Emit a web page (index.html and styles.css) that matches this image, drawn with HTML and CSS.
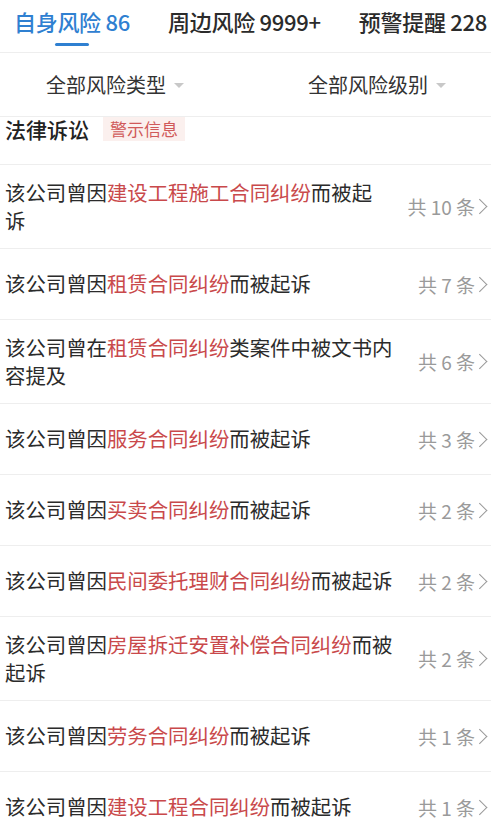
FILE: index.html
```html
<!DOCTYPE html>
<html lang="zh-CN">
<head>
    <meta charset="UTF-8">
    <meta name="viewport" content="width=device-width, initial-scale=1.0">
    <title>风险信息</title>
    <link rel="stylesheet" href="styles.css">
</head>
<body>
    <div class="tabs">
        <div class="tab active">自身风险 86</div>
        <div class="tab">周边风险 9999+</div>
        <div class="tab">预警提醒 228</div>
    </div>

    <div class="filters">
        <div class="filter">全部风险类型<span class="caret"></span></div>
        <div class="filter">全部风险级别<span class="caret"></span></div>
    </div>

    <div class="section-head">
        <span class="section-title">法律诉讼</span>
        <span class="tag">警示信息</span>
    </div>

    <ul class="list">
        <li class="row">
            <p class="desc">该公司曾因<em>建设工程施工合同纠纷</em>而被起诉</p>
            <span class="count">共 10 条</span>
        </li>
        <li class="row">
            <p class="desc">该公司曾因<em>租赁合同纠纷</em>而被起诉</p>
            <span class="count">共 7 条</span>
        </li>
        <li class="row">
            <p class="desc">该公司曾在<em>租赁合同纠纷</em>类案件中被文书内容提及</p>
            <span class="count">共 6 条</span>
        </li>
        <li class="row">
            <p class="desc">该公司曾因<em>服务合同纠纷</em>而被起诉</p>
            <span class="count">共 3 条</span>
        </li>
        <li class="row">
            <p class="desc">该公司曾因<em>买卖合同纠纷</em>而被起诉</p>
            <span class="count">共 2 条</span>
        </li>
        <li class="row">
            <p class="desc">该公司曾因<em>民间委托理财合同纠纷</em>而被起诉</p>
            <span class="count">共 2 条</span>
        </li>
        <li class="row">
            <p class="desc">该公司曾因<em>房屋拆迁安置补偿合同纠纷</em>而被起诉</p>
            <span class="count">共 2 条</span>
        </li>
        <li class="row">
            <p class="desc">该公司曾因<em>劳务合同纠纷</em>而被起诉</p>
            <span class="count">共 1 条</span>
        </li>
        <li class="row">
            <p class="desc">该公司曾因<em>建设工程合同纠纷</em>而被起诉</p>
            <span class="count">共 1 条</span>
        </li>
    </ul>
</body>
</html>
```

FILE: styles.css
```css
body {
    margin: 0;
    background: #fff;
    color: #2b2b2b;
    font-family: "Noto Sans CJK SC", "Noto Sans", sans-serif;
    overflow: hidden;
}
.tabs {
    display: flex;
    justify-content: space-between;
    align-items: flex-start;
    height: 52px;
    padding: 0 4px 0 14px;
    border-bottom: 1px solid #eeeeee;
}
.tab {
    position: relative;
    height: 52px;
    font-size: 22px;
    font-weight: 500;
    line-height: 42px;
    letter-spacing: -0.3px;
    color: #2b2b2b;
}
.tab.active {
    color: #2f80d1;
}
.tab.active::after {
    content: "";
    position: absolute;
    left: 50%;
    top: 43px;
    width: 34px;
    height: 3px;
    margin-left: -17px;
    border-radius: 2px;
    background: #2f80d1;
}
.filters {
    display: flex;
    justify-content: space-between;
    align-items: center;
    height: 63px;
    padding: 0 45px 0 46px;
    border-bottom: 1px solid #eeeeee;
    font-size: 20px;
    color: #333;
}
.filter {
    display: flex;
    align-items: center;
}
.caret {
    width: 0;
    height: 0;
    margin-left: 8px;
    margin-top: 2px;
    border-left: 5px solid transparent;
    border-right: 5px solid transparent;
    border-top: 5px solid #c8c8c8;
}
.section-head {
    display: flex;
    align-items: flex-start;
    height: 47px;
    padding: 0 0 0 5px;
    border-bottom: 1px solid #eeeeee;
}
.section-title {
    font-size: 21px;
    font-weight: 500;
    line-height: 24px;
    color: #222;
}
.tag {
    margin-left: 14px;
    padding: 0 7px;
    font-size: 17px;
    line-height: 24px;
    color: #d05a5a;
    background: #fbf0ee;
}
.list {
    list-style: none;
    margin: 0;
    padding: 0;
}
.row {
    display: flex;
    align-items: center;
    gap: 18px;
    box-sizing: border-box;
    min-height: 71px;
    padding: 14px 3px 14px 5px;
    border-bottom: 1px solid #eeeeee;
}
.desc {
    flex: 1;
    margin: 0;
    font-size: 20.4px;
    line-height: 27.5px;
    color: #2b2b2b;
}
.desc em {
    font-style: normal;
    color: #c9494b;
}
.count {
    display: flex;
    align-items: center;
    white-space: nowrap;
    font-size: 19px;
    color: #9a9a9a;
}
.count::after {
    content: "";
    width: 10px;
    height: 10px;
    margin-left: 2px;
    border-top: 1.5px solid #999;
    border-right: 1.5px solid #999;
    transform: rotate(45deg) translate(-2px, 2px);
}
```
